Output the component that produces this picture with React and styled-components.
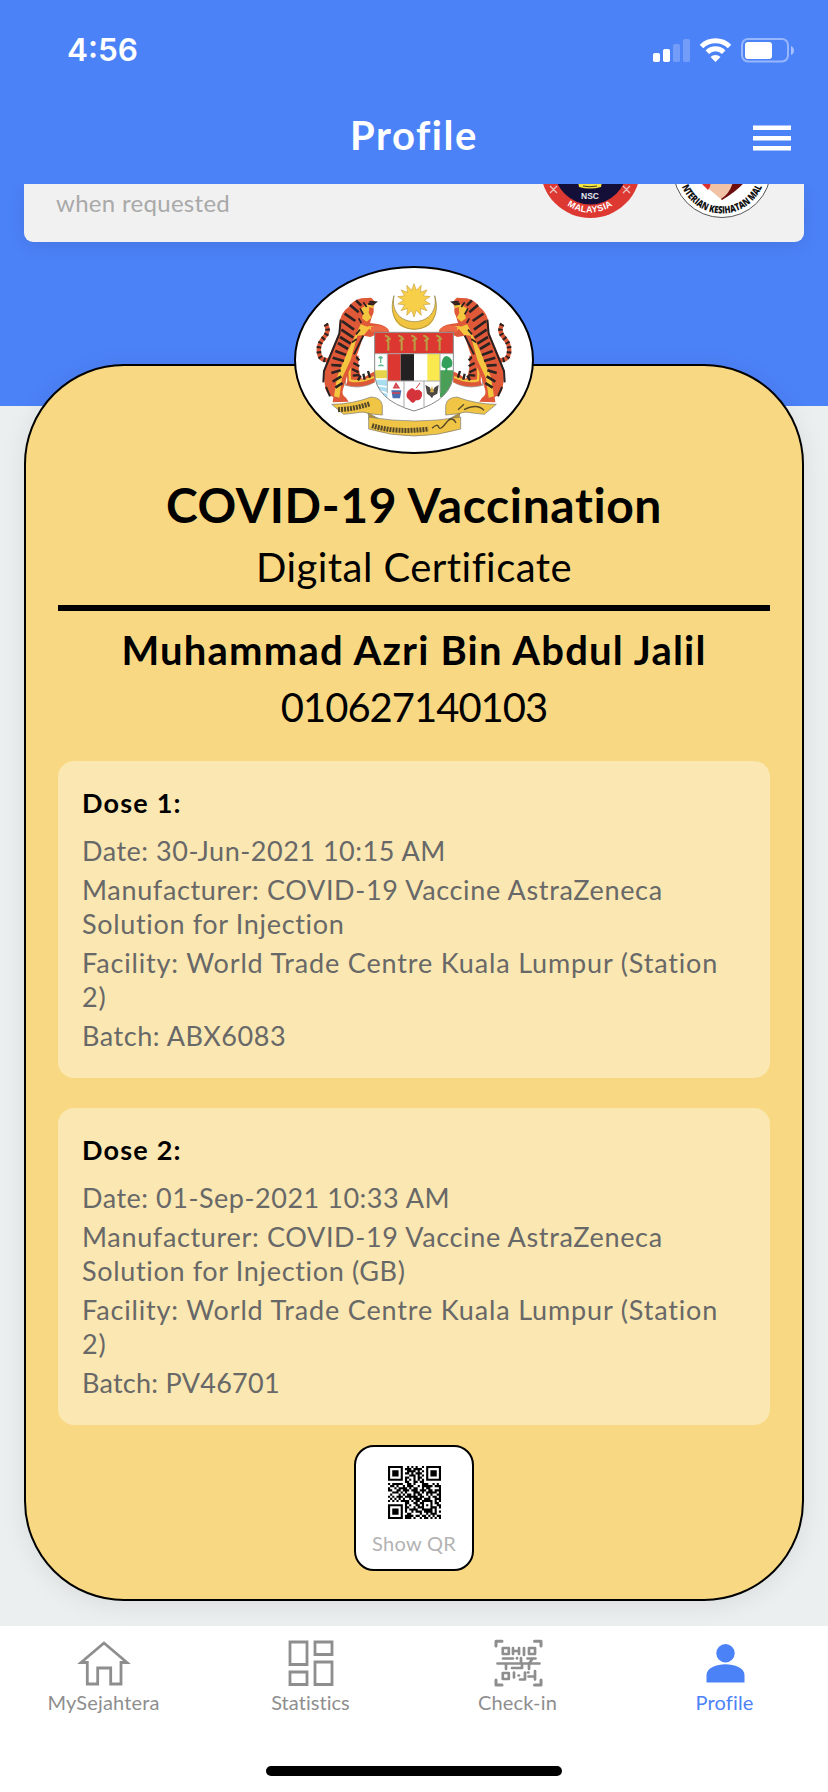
import React from "react";
import styled, { createGlobalStyle } from "styled-components";

const Global = createGlobalStyle`
  * { box-sizing: border-box; }
  body { margin: 0; background: #fff; font-family: Lato, "Open Sans", sans-serif; }
`;

const Page = styled.div`
  width: 828px;
  height: 1792px;
  display: flex;
  flex-direction: column;
  overflow: hidden;
  background: #ebeff0;
`;

const Header = styled.header`
  flex: none;
  height: 184px;
  background: #4c82f8;
  color: #fff;
`;

const StatusBar = styled.div`
  display: flex;
  align-items: center;
  justify-content: space-between;
  height: 100px;
  padding: 0 33px 0 67px;
`;

const Clock = styled.span`
  font: 600 31.5px/40px Inter, sans-serif;
  letter-spacing: 0;
`;

const StatusIcons = styled.svg`
  width: 142px;
  height: 26px;
  margin-top: -1px;
`;

const TitleBar = styled.div`
  display: grid;
  grid-template-columns: 1fr auto 1fr;
  align-items: center;
  height: 72px;
  padding: 0 37px;
`;

const PageTitle = styled.h1`
  grid-column: 2;
  margin: -2px 0 0 0;
  font-size: 40px;
  line-height: 56px;
  font-weight: 700;
  letter-spacing: 1.55px;
`;

const MenuIcon = styled.svg`
  justify-self: end;
  width: 38px;
  height: 26px;
  margin-top: 4px;
`;

const Content = styled.main`
  flex: none;
  height: 1442px;
  padding: 0 24px;
  overflow: hidden;
  background: linear-gradient(#4c82f8 222px, #ebeff0 222px);
`;

const Notice = styled.section`
  display: flex;
  justify-content: space-between;
  height: 58px;
  padding: 0 32px;
  overflow: hidden;
  border-radius: 0 0 9px 9px;
  background: #f1f1f1;
  box-shadow: 0 4px 18px rgba(0, 0, 0, 0.09);
`;

const NoticeText = styled.span`
  color: #a9a9a9;
  font-size: 24px;
  line-height: 38px;
  letter-spacing: 0.3px;
`;

const Badges = styled.svg`
  width: 240px;
  height: 58px;
  margin-right: -7px;
`;

const Certificate = styled.section`
  position: relative;
  display: flex;
  flex-direction: column;
  height: 1237px;
  margin-top: 122px;
  padding: 110px 32px 28px;
  border: 2px solid #000;
  border-radius: 100px;
  background: #f8d882;
  box-shadow: 0 4px 26px rgba(0, 0, 0, 0.08);
`;

const Crest = styled.div`
  position: absolute;
  top: -100px;
  left: 268px;
  width: 240px;
  height: 188px;
  border: 2px solid #000;
  border-radius: 50%;
  background: #fff;
  overflow: hidden;
  svg { display: block; }
`;

const Heading = styled.h2`
  flex: none;
  margin: 0;
  text-align: center;
  white-space: nowrap;
  font-weight: ${(p) => (p.$bold ? 700 : 400)};
  font-size: ${(p) => p.$size}px;
  line-height: ${(p) => p.$line}px;
  letter-spacing: ${(p) => p.$track}px;
`;

const Rule = styled.hr`
  flex: none;
  width: 100%;
  height: 6px;
  margin: 5px 0 11px;
  border: 0;
  background: #000;
`;

const Doses = styled.div`
  display: grid;
  gap: 30px;
  margin-top: 25px;
`;

const DoseCard = styled.article`
  display: flex;
  flex-direction: column;
  gap: 5px;
  height: 317px;
  padding: 25px 24px;
  border-radius: 16px;
  background: #fae7b1;
`;

const DoseTitle = styled.h3`
  margin: 0 0 9px;
  font-size: 27px;
  line-height: 34px;
  font-weight: 700;
  letter-spacing: 1.2px;
`;

const Detail = styled.p`
  margin: 0;
  color: #686868;
  font-size: 27px;
  line-height: 34px;
  letter-spacing: ${(p) => p.$track}px;
  white-space: pre;
`;

const QrButton = styled.button`
  flex: none;
  align-self: center;
  display: flex;
  flex-direction: column;
  align-items: center;
  width: 120px;
  height: 126px;
  margin-top: 20px;
  padding: 19px 0 0;
  border: 2px solid #000;
  border-radius: 20px;
  background: #fff;
  color: #b3b3b3;
  font: 400 20px/24px Lato, sans-serif;
  letter-spacing: 0.3px;
  white-space: nowrap;
  svg { flex: none; width: 53px; height: 53px; margin-bottom: 12px; }
`;

const Footer = styled.footer`
  flex: 1;
  background: #fff;
  display: flex;
  flex-direction: column;
  align-items: center;
`;

const Tabs = styled.nav`
  display: grid;
  grid-template-columns: repeat(4, 1fr);
  width: 100%;
  height: 140px;
`;

const Tab = styled.a`
  display: flex;
  flex-direction: column;
  align-items: center;
  padding-top: 10px;
  color: ${(p) => (p.$active ? "#4c82f8" : "#8e8e8e")};
  font-size: 20px;
  line-height: 24px;
  letter-spacing: ${(p) => p.$track}px;
  font-variant-ligatures: none;
  svg { width: 56px; height: 54px; margin-bottom: 0; }
`;

const HomeIndicator = styled.div`
  width: 296px;
  height: 10px;
  border-radius: 5px;
  background: #000;
`;

const QR_ROWS = [
  "1111111001010100101111111",
  "1000001011101111001000001",
  "1011101001111010101011101",
  "1011101011010111001011101",
  "1011101000111010101011101",
  "1000001011001011001000001",
  "1111111010101010101111111",
  "0000000011001101100000000",
  "1011111001101000111001010",
  "0110100101110010111110111",
  "1001011110101100101100001",
  "1100110111011101110110111",
  "0011101010001110101111101",
  "0100010101101011001010011",
  "1010111011111101100101101",
  "0101010100101111011100111",
  "1010101111010110111110101",
  "0000000011001101100010110",
  "1111111010100110101010011",
  "1000001011001011100011101",
  "1011101010111100111110100",
  "1011101010010111011110101",
  "1011101001100001001011100",
  "1000001011110110110101011",
  "1111111011101001011010101",
];

const qrPath = QR_ROWS.map((row, y) =>
  [...row].map((bit, x) => (bit === "1" ? `M${x} ${y}h1v1h-1z` : "")).join("")
).join("");

function QrCode() {
  return (
    <svg viewBox="0 0 25 25">
      <path d={qrPath} fill="#000" />
    </svg>
  );
}

function SignalWifiBattery() {
  return (
    <StatusIcons viewBox="0 0 142 26" fill="#fff">
      <rect x="0" y="16" width="7" height="9" rx="1.800" />
      <rect x="10" y="12" width="7" height="13" rx="1.800" />
      <g opacity=".22">
        <rect x="20" y="7" width="7" height="18" rx="1.800" />
        <rect x="30" y="2" width="7" height="23" rx="1.800" />
      </g>
      <g fill="none" stroke="#fff" strokeWidth="5">
        <path d="M48.500 9.500a20 20 0 0 1 28 0" />
        <path d="M54.300 15.300a11.500 11.500 0 0 1 16.400 0" />
      </g>
      <path d="M62.500 25l-5-5a7 7 0 0 1 10 0z" />
      <rect x="89" y="2" width="46" height="22.500" rx="6" fill="none" stroke="#fff" strokeOpacity=".42" strokeWidth="2" />
      <rect x="92" y="5" width="27" height="17" rx="3" />
      <path d="M138 9q3 1.500 3 4.500t-3 4.500z" opacity=".5" />
    </StatusIcons>
  );
}

function AgencyBadges() {
  return (
    <Badges viewBox="539 184 240 58" fontFamily="Liberation Sans, sans-serif" fontWeight="700">
      <circle cx="590.500" cy="168" r="50" fill="#dd3932" />
      <circle cx="590.500" cy="168" r="36.500" fill="#140f38" />
      <path d="M578 182h24l-1 5q-11 3-22 0z" fill="#f4e540" />
      <path d="M583 186q7 1.500 14 0" stroke="#3d3a25" fill="none" />
      <g stroke="#e9c4c2" strokeWidth="1.300">
        <path d="M550 186l7 7m0-7l-7 7M623 186l7 7m0-7l-7 7" />
      </g>
      <text x="590" y="199" fontSize="8.500" fill="#e6e6ec" textAnchor="middle">NSC</text>
      <path id="nscArc" d="M548 168a42 44.500 0 0 0 84 0" fill="none" />
      <text fontSize="9" fill="#fff" textAnchor="middle" letterSpacing=".3">
        <textPath href="#nscArc" startOffset="50%">MALAYSIA</textPath>
      </text>
      <circle cx="722" cy="168.500" r="49" fill="#fff" stroke="#555" strokeWidth="1" />
      <path d="M696 178l26 22 26-22z" fill="#f1c2a5" />
      <path d="M696 178h14q2 8-2 12z" fill="#d9322e" />
      <path d="M748 178h-14q-3 15-13 21l1 1q17-10 26-22z" fill="#6d0d0d" />
      <path id="mohArc" d="M678 168.500a44 45 0 0 0 88 0" fill="none" />
      <text fontSize="10" fill="#111" textAnchor="middle" fontFamily="Open Sans, sans-serif" fontWeight="800">
        <textPath href="#mohArc" startOffset="50%" textLength="102" lengthAdjust="spacingAndGlyphs">NTERIAN KESIHATAN MAL</textPath>
      </text>
    </Badges>
  );
}

function Supporter() {
  return (
    <g>
      <path d="M137 207q14 22-6 42-18 20-14 44 2 26 34 22" fill="none" stroke="#dd5836" strokeWidth="13" />
      <path d="M137 207q14 22-6 42-18 20-14 44 2 26 34 22" fill="none" stroke="#2b2222" strokeWidth="14" strokeDasharray="6 9" />
      <path d="M216 300q-20 30-14 78l-4 12q44 12 86-8l2-34q-22 10-40 24-14-26-10-70z" fill="#dd5836" />
      <path d="M216 310q-10 30-6 66 30 8 72-10" fill="none" stroke="#f4c63f" strokeWidth="7" />
      <path d="M222 300l16 16m-22 6l22 12m-22 8l20 10m-18 10l20-2m-4 16l8-14m12 12l-4-18m20 12l-6-20" stroke="#2b2222" strokeWidth="7" />
      <path d="M244 130q-26 6-38 26-32 22-28 74l-28 66q-26 46-14 104 4 20 24 26l-2 16 48-2-8-12q-16-8-8-28l14-46q26-44 36-80l10-32 22 4q20-12 56-16-6-20-40-24l-18-2 6-20q8-16 4-26l6-16-12-14z" fill="#df5838" />
      <path d="M262 148l20 2-4 10-10-4-2 18 8 14-14 12-14-10 4-16-12-10zM242 208l28 10-18 22-20 2-20 72-26 56-8 58-16-4 10-60 30-72zM262 214q26-4 34 4l-22 10z" fill="#f4c63f" />
      <path d="M228 136l16 16m-34-2l26 22m-42 4l32 22m-40 0l36 26m-38 0l36 24m-40-2l32 20m-38-2l30 18m-38 6l32 12m-40 8l34 10m-38 12l30 2m-30 22l28-8m-24 34l26-16m-18 34l22-14" stroke="#2b2222" strokeWidth="8" />
      <path d="M250 142l10 14m-20 4l10 18m-14 12l8 14m-4 20l-12 14m2 14l-14 10" stroke="#2b2222" strokeWidth="5" />
      <path d="M268 140l18 2-8 6-14-2M182 194l-4 42-46 112-2 34M250 242l-28 56M138 396l12 28" fill="none" stroke="#2b2222" strokeWidth="6" />
      <path d="M272 216q30-12 54 8l-10 8q-20-6-42 0z" fill="#ed6844" />
    </g>
  );
}

function CoatOfArms() {
  const rays = Array.from({ length: 28 }, (_, i) => {
    const a = (i * Math.PI) / 14 - Math.PI / 2;
    const r = i % 2 ? 31 : 50;
    return `${402 + r * Math.cos(a)},${136 + r * Math.sin(a)}`;
  }).join(" ");
  return (
    <svg width="236" height="184" viewBox="48 39 708 552">
      <path d="M342 122c-34 132 154 134 122 0q20 100-61 102-82-2-61-102z" fill="#f1c441" />
      <path d="M342 122c-40 134 162 134 122 0 20 104-142 104-122 0z" fill="#f1c441" stroke="#8d7b3c" strokeWidth="2" />
      <polygon points={rays} fill="#f8cf48" stroke="#c8a144" strokeWidth="2" />
      <path d="M196 340v50q50 14 88-10M608 340v50q-50 14-88-10" fill="none" stroke="#aaa" strokeWidth="4" />
      <Supporter />
      <g transform="translate(804 0) scale(-1 1)"><Supporter /></g>
      <g stroke="#777" strokeWidth="2">
        <path d="M155 448q60 0 118-22 32 2 34 26v28l-42-4q-12-8-38-2l-36 4zM649 448q-60 0-118-22-32 2-34 26v28l42-4q12-8 38-2l36 4z" fill="#f0c545" />
        <path d="M265 474l32 18-30 4zM539 474l-32 18 30 4z" fill="#b7922d" />
        <path d="M266 486q138 24 276 0v36q-140 42-276 0z" fill="#f0c545" />
      </g>
      <g fill="none" stroke="#54472a" strokeWidth="6">
        <path d="M174 464q50-2 96-18M276 512q70 22 170 10" strokeWidth="15" strokeDasharray="6 3" />
        <path d="M456 520q16-16 20-4t22-12 30 0M534 464l18-16m0 16q40-20 60 2" strokeWidth="4" />
      </g>
      <clipPath id="shieldClip"><path d="M284 232h236v120q0 82-118 116-118-34-118-116z" /></clipPath>
      <g clipPath="url(#shieldClip)">
        <path d="M284 232h236v240H284z" fill="#fff" />
        <path d="M284 232h236v64H284zM322 296h40v82h-40z" fill="#dc3730" />
        <path d="M362 296h40v82h-40z" fill="#242122" />
        <path d="M442 296h38v82h-38z" fill="#fae94e" />
        <path d="M284 346h38v24h-38z" fill="#e7d34a" />
        <path d="M284 374h38v60h-38z" fill="#a9def1" />
        <path d="M284 390l38 6m-38 8l38 10" stroke="#fff" strokeWidth="5" />
        <path d="M480 346h40v80h-40z" fill="#4a9f57" />
      </g>
      <path d="M488 312q8-16 22-4 12 12 4 28l-12 4v12h-6v-12q-18-2-8-28z" fill="#32a05a" />
      <path d="M294 308q8-10 16 0l-6 4v12h-4v-12zM292 334q10-12 22 0" fill="#65bd91" />
      <g fill="none" stroke="#baa044" strokeWidth="6">
        {[324, 364, 403, 439, 478].map((x) => (
          <path key={x} d={`M${x - 9} 241l10 5v41m-7-29l14-8`} />
        ))}
      </g>
      <path d="M322 296v118M372 378v78M432 378v78M480 296v118M284 296h236M322 378h158" fill="none" stroke="#aaa" strokeWidth="3" />
      <path d="M334 406h30l-4 24h-22z" fill="#486eb0" />
      <path d="M342 398l6-12 8 12zM336 414h24" fill="#aac" stroke="#d9444c" strokeWidth="5" />
      <path d="M385 408q14-14 20 0 18-8 20 10-2 20-18 16-8 16-18 0-14-8-4-26zM408 400l12-16" fill="#d5333c" stroke="#d5333c" strokeWidth="3" />
      <path d="M436 390l13 7 7 15 8-15 12-7-4 26-12 6-4 8-6-8-9-6z" fill="#4c4743" />
      <path d="M450 412l6-20 6 20" fill="#ddb04a" />
      <path d="M284 232h236v120q0 82-118 116-118-34-118-116z" fill="none" stroke="#888" strokeWidth="3" />
    </svg>
  );
}

function HomeIcon() {
  return (
    <svg viewBox="0 0 56 54" fill="none" stroke="currentColor" strokeWidth="2.800">
      <path d="M28 7L5 26.500h6.300V48h10.400V32h13V48H45V26.500h6z" />
    </svg>
  );
}

function StatsIcon() {
  return (
    <svg viewBox="0 0 56 54" fill="none" stroke="currentColor" strokeWidth="2.800">
      <path d="M7 6h17v22.500H7zM32 6h17v12.500H32zM7 36h17v12.500H7zM32 26h17v22.500H32z" />
    </svg>
  );
}

function ScanIcon() {
  return (
    <svg viewBox="0 0 56 54" fill="none" stroke="currentColor" strokeWidth="2.700" strokeLinecap="round" strokeLinejoin="round">
      <path d="M6 10V5.300h6M44.500 5.300h6.500V10M6 44v5h6M44.500 49H51v-5" strokeWidth="3" />
      <path d="M12.800 12h6v6h-6zM39 12h6v6h-6zM12.800 37h6v6h-6z" />
      <path d="M23 12v6M29 12v6M23 15h6M34 12v7M13 22.500h10M27 22v.5M31 22v5M37.500 22.500h8M7.500 27.500h42M16 27.500V33M22 32h10v-4.500M39 33v-5.500l3-4M24 36.500v5M28.500 39.500h.5M30 43.500h5v-7M38 36.500h.5M38.500 40.500h6.500M45 35v8.500" />
    </svg>
  );
}

function ProfileIcon() {
  return (
    <svg viewBox="0 0 56 54" fill="currentColor">
      <circle cx="28.500" cy="17.300" r="9.200" />
      <path d="M9.500 46.500V39c0-7 10-10.700 19-10.700s19 3.700 19 10.700v7.500z" />
    </svg>
  );
}

const DOSES = [
  {
    title: "Dose 1:",
    date: "Date: 30-Jun-2021 10:15 AM",
    maker: "Manufacturer: COVID-19 Vaccine AstraZeneca\nSolution for Injection",
    batch: "Batch: ABX6083",
    batchTrack: 0.55,
  },
  {
    title: "Dose 2:",
    date: "Date: 01-Sep-2021 10:33 AM",
    maker: "Manufacturer: COVID-19 Vaccine AstraZeneca\nSolution for Injection (GB)",
    batch: "Batch: PV46701",
    batchTrack: 0.25,
  },
];

const TABS = [
  { label: "MySejahtera", icon: HomeIcon, track: 0.15 },
  { label: "Statistics", icon: StatsIcon, track: 0.05 },
  { label: "Check-in", icon: ScanIcon, track: 0.15 },
  { label: "Profile", icon: ProfileIcon, track: 0.15, active: true },
];

export default function App() {
  return (
    <Page>
      <Global />
      <Header>
        <StatusBar>
          <Clock>4:56</Clock>
          <SignalWifiBattery />
        </StatusBar>
        <TitleBar>
          <PageTitle>Profile</PageTitle>
          <MenuIcon viewBox="0 0 38 26" fill="#fff">
            <path d="M0 .5h38v4.500H0zM0 11h38v4.500H0zM0 21h38v4.500H0z" />
          </MenuIcon>
        </TitleBar>
      </Header>
      <Content>
        <Notice>
          <NoticeText>when requested</NoticeText>
          <AgencyBadges />
        </Notice>
        <Certificate>
          <Crest><CoatOfArms /></Crest>
          <Heading $bold $size={48} $line={58} $track={0.6}>COVID-19 Vaccination</Heading>
          <Heading as="p" $size={40} $line={66} $track={0.45}>Digital Certificate</Heading>
          <Rule />
          <Heading $bold $size={40} $line={56} $track={1.2}>Muhammad Azri Bin Abdul Jalil</Heading>
          <Heading as="p" $size={40} $line={58} $track={-1}>010627140103</Heading>
          <Doses>
            {DOSES.map((d) => (
              <DoseCard key={d.title}>
                <DoseTitle>{d.title}</DoseTitle>
                <Detail $track={0.52}>{d.date}</Detail>
                <Detail $track={0.66}>{d.maker}</Detail>
                <Detail $track={0.84}>{"Facility: World Trade Centre Kuala Lumpur (Station\n2)"}</Detail>
                <Detail $track={d.batchTrack}>{d.batch}</Detail>
              </DoseCard>
            ))}
          </Doses>
          <QrButton>
            <QrCode />
            Show QR
          </QrButton>
        </Certificate>
      </Content>
      <Footer>
        <Tabs>
          {TABS.map(({ label, icon: Icon, track, active }) => (
            <Tab key={label} $active={active} $track={track}>
              <Icon />
              {label}
            </Tab>
          ))}
        </Tabs>
        <HomeIndicator />
      </Footer>
    </Page>
  );
}
